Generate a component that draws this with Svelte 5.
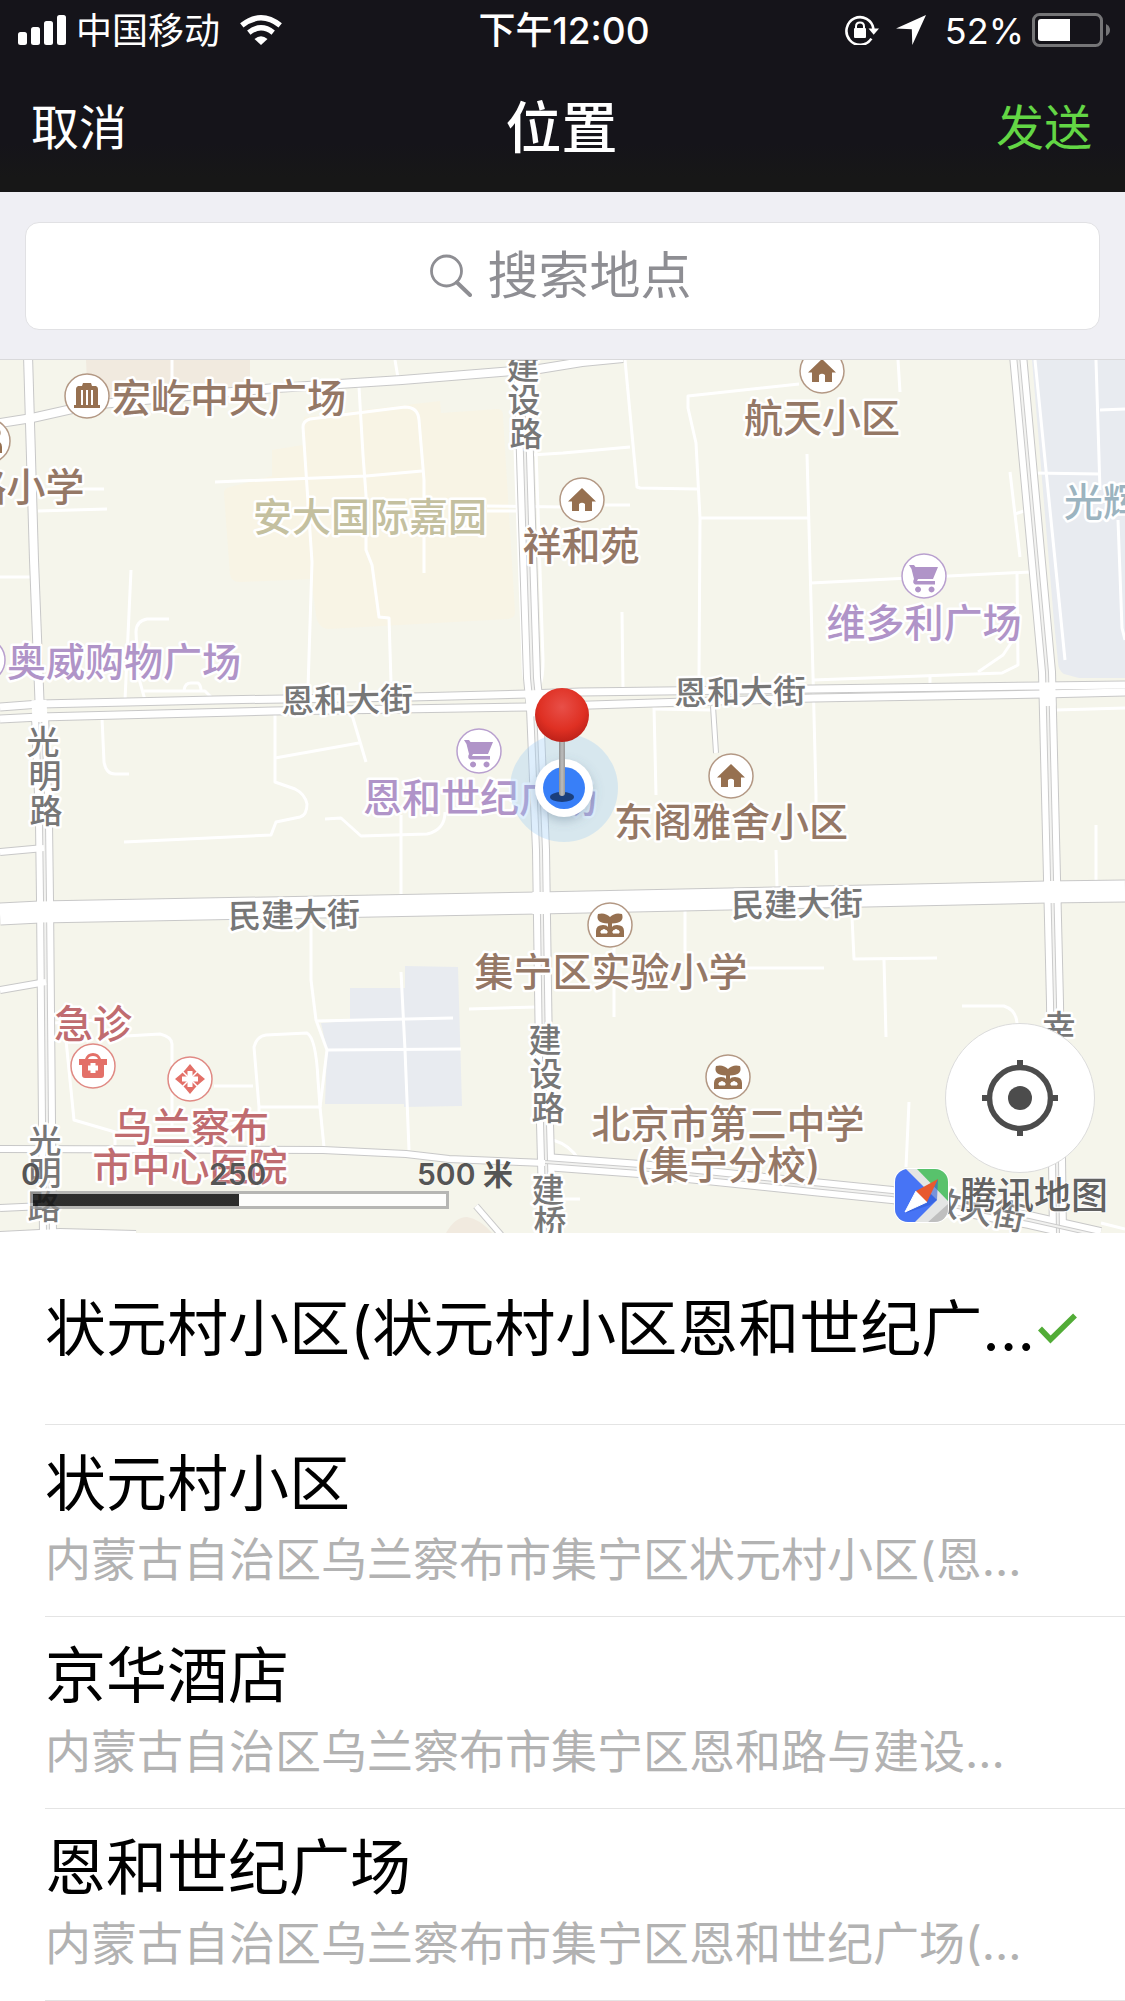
<script lang="ts">
  type Place = { name: string; address?: string };

  const places: Place[] = [
    { name: '状元村小区(状元村小区恩和世纪广…' },
    { name: '状元村小区', address: '内蒙古自治区乌兰察布市集宁区状元村小区(恩…' },
    { name: '京华酒店', address: '内蒙古自治区乌兰察布市集宁区恩和路与建设…' },
    { name: '恩和世纪广场', address: '内蒙古自治区乌兰察布市集宁区恩和世纪广场(…' },
  ];
  let selected = $state(0);

  const areas = [
    { kind: 'plaza', d: 'M86 360H250V390L88 405Z' },
    { kind: 'plaza', d: 'M446 1233Q455 1217 467 1217Q480 1219 492 1233Z' },
    { kind: 'estate', d: 'M304 417L440 401L441 413L498 409Q503 409 503 416L515 612Q515 618 508 619L328 629Q318 628 316 615L311 579L240 582Q231 582 230 574L224 493Q224 488 230 487L272 476V450L303 445Z' },
    { kind: 'campus', d: 'M1032 360H1125V678H1079L1064 674Q1058 670 1058 662L1054 622Z' },
    { kind: 'campus', d: 'M405 966L458 967L462 1106L404 1107V1104H325L327 1050L321 1023L350 1021V988H405Z' },
  ];

  const lanes = [
    'M172 360V380', 'M395 360L398 378', 'M215 482L366 476L422 471',
    'M359 387L363 455L366 495V550L372 565L379 617L389 618L391 682',
    'M308 688L312 562L303 427Q303 421 310 419L405 407Q418 407 419 420L424 480V573',
    'M83 489H104', 'M38 511L107 509', 'M0 577H34', 'M131 570L125 700',
    'M169 619H147Q136 621 136 632L138 675L145 700',
    'M144 691H205L212 698', 'M184 690Q185 683 191 683H198Q201 685 201 691',
    'M487 506L563 507L588 504', 'M487 511H535', 'M531 455L563 453L630 447',
    'M102 718L104 762Q106 774 115 774H129',
    'M275 713V782L295 789Q305 794 307 804Q307 815 300 817L276 822L271 835L124 842',
    'M275 758L359 743', 'M352 715L366 762',
    'M325 819L341 818L361 836L427 834Q445 830 445 812', 'M401 815V897',
    'M311 923V980L316 1020L327 1050L320 1107L324 1147', 'M316 1021L453 1018',
    'M327 1050L461 1049', 'M401 972L405 1050L409 1150', 'M469 1009L537 1007',
    'M54 1023L97 1020', 'M126 1036L160 1034Q172 1037 172 1044V1130',
    'M66 1040L74 1120L115 1132V1147', 'M214 1086H253',
    'M259 1147V1107L254 1047Q257 1036 266 1035L307 1033Q316 1038 318 1080L320 1107',
    'M258 1107H320', 'M200 1130L259 1118',
    'M625 360L637 487L640 488L697 489', 'M799 384L688 396V408L696 443L700 518L699 677',
    'M700 518H808', 'M807 454L813 675L816 795V806', 'M898 360L900 392', 'M605 505H630',
    'M622 612L623 688', 'M811 583L1030 572', 'M1010 472L1020 557', 'M1015 514L1024 511',
    'M1017 573L1018 665L1002 673L813 680', 'M978 672L1003 655L1013 640', 'M930 677V685',
    'M1035 360L1065 660', 'M1096 360L1100 490', 'M1118 520L1122 628L1125 640',
    'M1100 410L1125 409', 'M1032 473L1100 474', 'M1056 710L1125 708',
    'M654 707L656 795', 'M654 709L711 710', 'M776 850L777 887', 'M685 910V953',
    'M747 968H824', 'M614 947V1017', 'M852 917L854 959L937 958', 'M884 960L886 1037',
    'M962 1006H1004Q1016 1010 1017 1023', 'M1096 825V882', 'M909 1102L906 1167',
    'M553 1140Q570 1145 579 1160', 'M562 1199H580', 'M1101 1223L1125 1229',
    'M515 450L523 660Q523 683 528 687', 'M536 450L543 660Q543 683 538 688',
  ];

  const streets = [
    { w: 10, d: 'M0 423L32 418L90 405L276 388L402 380L539 369L582 362L623 358' },
    { w: 10, d: 'M28 355L34 560L40 714' },
    { w: 8, d: 'M0 852L44 848' },
    { w: 8, d: 'M0 990L46 982' },
    { w: 8, d: 'M0 1208L44 1206' },
    { w: 6, d: 'M713 706L716 753' },
    { w: 7, d: 'M476 1206L502 1236' },
    { w: 8, d: 'M0 1235L60 1232L136 1234' },
    { w: 8, d: 'M0 1149L323 1150L406 1154L449 1159L545 1163' },
    { w: 9, d: 'M0 707L40 704L215 700L411 697L528 694L580 692L813 689L1043 686L1125 685' },
    { w: 9, d: 'M0 719L40 717L273 711L528 707L591 705L813 698L1043 694L1125 692' },
    { w: 23, d: 'M0 914L40 912L539 903L1047 892L1125 891' },
  ];
  const avenues = [
    'M40 714L44 823L45 900L48 1236',
    'M522 355L527 522L532 678L535 708L541 850L545 1123L548 1236',
    'M1018 355L1047 672L1050 795L1055 1003L1058 1236',
    'M545 1162L640 1169L813 1187L892 1195L1029 1220L1100 1236',
  ];

  const labels = [
    { t: '宏屹中央广场', x: 229, y: 397, c: 'brown' },
    { t: '路小学', x: 26, y: 486, c: 'brown' },
    { t: '安大国际嘉园', x: 370, y: 516, c: 'olive' },
    { t: '奥威购物广场', x: 124, y: 661, c: 'purple' },
    { t: '祥和苑', x: 581, y: 545, c: 'brown' },
    { t: '航天小区', x: 822, y: 417, c: 'brown' },
    { t: '光辉', x: 1103, y: 501, c: 'steel' },
    { t: '维多利广场', x: 924, y: 622, c: 'purple' },
    { t: '恩和世纪广场', x: 480, y: 797, c: 'purple' },
    { t: '东阁雅舍小区', x: 731, y: 821, c: 'brown' },
    { t: '集宁区实验小学', x: 611, y: 971, c: 'brown' },
    { t: '北京市第二中学', x: 728, y: 1123, c: 'brown' },
    { t: '(集宁分校)', x: 728, y: 1164, c: 'brown' },
    { t: '急诊', x: 93, y: 1023, c: 'red' },
    { t: '乌兰察布', x: 191, y: 1126, c: 'red' },
    { t: '市中心医院', x: 190, y: 1166, c: 'red' },
  ];

  const streetNames = [
    { t: '恩和大街', x: 347, y: 700, r: -1 },
    { t: '恩和大街', x: 740, y: 692, r: -1 },
    { t: '民建大街', x: 294, y: 915, r: -1 },
    { t: '民建大街', x: 797, y: 904, r: -1 },
    { t: '建', x: 523, y: 367, r: 0 }, { t: '设', x: 524, y: 400, r: 0 }, { t: '路', x: 526, y: 434, r: 0 },
    { t: '光', x: 43, y: 742, r: 0 }, { t: '明', x: 45, y: 776, r: 0 }, { t: '路', x: 46, y: 811, r: 0 },
    { t: '光', x: 45, y: 1141, r: 0 }, { t: '明', x: 45, y: 1173, r: 0 }, { t: '路', x: 44, y: 1207, r: 0 },
    { t: '建', x: 545, y: 1040, r: 0 }, { t: '设', x: 546, y: 1074, r: 0 }, { t: '路', x: 548, y: 1108, r: 0 },
    { t: '建', x: 548, y: 1190, r: 0 }, { t: '桥', x: 550, y: 1222, r: 0 },
    { t: '幸', x: 1059, y: 1027, r: 0 },
    { t: '教', x: 944, y: 1203, r: 12 }, { t: '大', x: 977, y: 1210, r: 12 }, { t: '街', x: 1009, y: 1216, r: 12 },
  ];

  const markers = [
    { k: 'hall', x: 87, y: 396 },
    { k: 'school', x: -12, y: 441 },
    { k: 'home', x: 822, y: 371 },
    { k: 'home', x: 582, y: 500 },
    { k: 'home', x: 731, y: 776 },
    { k: 'shop', x: 924, y: 576 },
    { k: 'shop', x: 479, y: 751 },
    { k: 'shop', x: -17, y: 660 },
    { k: 'school', x: 610, y: 925 },
    { k: 'school', x: 728, y: 1077 },
    { k: 'aid', x: 93, y: 1066 },
    { k: 'clinic', x: 190, y: 1079 },
  ];
</script>

<div class="screen">
  <header>
    <div class="status">
      <div class="side">
        <svg class="signal" width="48" height="30" viewBox="0 0 48 30" fill="#fff" aria-hidden="true">
          <rect y="17" width="9" height="13" rx="2.5" /><rect x="13" y="12" width="9" height="18" rx="2.5" />
          <rect x="26" y="6" width="9" height="24" rx="2.5" /><rect x="39" width="9" height="30" rx="2.5" />
        </svg>
        <span class="carrier">中国移动</span>
        <svg class="wifi" width="42" height="30" viewBox="0 0 42 30" aria-hidden="true">
          <g fill="none" stroke="#fff" stroke-width="5.4">
            <path d="M1.8 10.4Q21 -4.8 40.2 10.4" /><path d="M8.8 17.6Q21 8 33.2 17.6" />
          </g>
          <path d="M14.5 24Q21 18.500 27.500 24L21 30Z" fill="#fff" />
        </svg>
      </div>
      <time>下午12:00</time>
      <div class="side right">
        <svg class="lock" width="34" height="30" viewBox="0 0 34 30" aria-hidden="true">
          <path d="M28.500 14A13.600 13.800 0 1 0 26.400 23.600" fill="none" stroke="#fff" stroke-width="2.6" />
          <path d="M23.500 13.500H34L28.700 19.800Z" fill="#fff" />
          <rect x="9" y="13" width="12" height="10" rx="1" fill="#fff" />
          <path d="M11 14V11.500Q11 7.500 15 7.500Q19 7.500 19 11.500V14" fill="none" stroke="#fff" stroke-width="2" />
        </svg>
        <svg class="arrow" width="30" height="30" viewBox="0 0 30 30" aria-hidden="true">
          <path d="M30 0L16.300 30L15.800 14.300L0 13.500Z" fill="#fff" />
        </svg>
        <span class="percent">52%</span>
        <svg width="78" height="34" viewBox="0 0 78 34" aria-hidden="true">
          <rect x="1.5" y="1.5" width="68" height="31" rx="6" fill="none" stroke="#757577" stroke-width="3" />
          <path d="M9 6H38V28H9Q6 28 6 25V9Q6 6 9 6Z" fill="#fff" />
          <path d="M74 11Q78 13 78 17T74 23Z" fill="#757577" />
        </svg>
      </div>
    </div>
    <nav>
      <button class="nav-btn">取消</button>
      <h1>位置</h1>
      <button class="nav-btn send">发送</button>
    </nav>
  </header>

  <div class="search-bar">
    <label class="search">
      <svg width="42" height="43" viewBox="0 0 42 43" fill="none" stroke="#8e8e93" aria-hidden="true">
        <circle cx="16.500" cy="17" r="15" stroke-width="2.8" />
        <path d="M27 28.500L40 41" stroke-width="4" stroke-linecap="round" />
      </svg>
      <input type="text" placeholder="搜索地点" aria-label="搜索地点" />
    </label>
  </div>

  <section class="map" aria-label="地图">
    <svg class="canvas" viewBox="0 360 1125 873">
      <defs>
        <radialGradient id="pinHead" cx="0.5" cy="0.35" r="0.65">
          <stop offset="0" stop-color="#e84f48" /><stop offset="0.65" stop-color="#df3023" /><stop offset="1" stop-color="#bd2119" />
        </radialGradient>
        <linearGradient id="pinStick"><stop offset="0" stop-color="#8f8f8f" /><stop offset="0.5" stop-color="#bdbdbd" /><stop offset="1" stop-color="#999" /></linearGradient>
        <filter id="dotShadow" x="-50%" y="-50%" width="200%" height="200%"><feGaussianBlur stdDeviation="6" /></filter>
      </defs>
      {#each areas as a}<path class={a.kind} d={a.d} />{/each}
      <g class="lanes">{#each lanes as d}<path {d} />{/each}</g>
      <g class="casing">
        {#each streets as s}<path d={s.d} stroke-width={s.w} />{/each}
        {#each avenues as d}<path {d} stroke-width="18" />{/each}
      </g>
      <g class="fill">
        {#each avenues as d}<path {d} stroke-width="16" />{/each}
      </g>
      <g class="median">{#each avenues as d}<path {d} /><path class="gap" {d} />{/each}</g>
      <g class="fill">
        {#each streets as s}<path d={s.d} stroke-width={s.w - 2} />{/each}
        <path d="M532 692L536 716M1047 684L1048 706M39 700L40 722M540 892V914M1052 881L1053 903" stroke-width="15" />
      </g>

      {#each streetNames as s}
        <text class="street" x={s.x} y={s.y + 12} transform="rotate({s.r} {s.x} {s.y})">{s.t}</text>
      {/each}
      {#each labels as l}
        <text class="label {l.c}" x={l.x} y={l.y + 15}>{l.t}</text>
      {/each}

      {#each markers as m}
        <g class="marker {m.k}" transform="translate({m.x} {m.y})">
          <circle r="22" />
          {#if m.k === 'home'}
            <path d="M0 -12L14 1.500H10V11H3V4Q0 1.500 -3 4V11H-10V1.500H-14Z" />
          {:else if m.k === 'shop'}
            <path d="M-15 -11H-10L-8.500 -9H14L9 3H-6L-7 5H11V8.500H-9Q-12 7 -10 3L-12.500 -7Z" />
            <path d="M-6 10.500a3 3 0 1 0 .1 0ZM7.500 10.500a3 3 0 1 0 .1 0Z" />
          {:else if m.k === 'hall'}
            <path d="M-4 -13H4L5 -10H9Q11 -9 11 -7V9H13V12H-13V9H-11V-7Q-11 -9 -9 -10H-5Z" />
            <path class="cut" d="M-5 -6V9M0 -6V9M5 -6V9" />
          {:else if m.k === 'school'}
            <path d="M-12 -11Q-5 -13 0 -8Q5 -13 12 -11Q15 -2 2 -1.500V2Q3 0 7 0Q14 0 14 6V12H-14V6Q-14 0 -7 0Q-3 0 -2 2V-1.500Q-15 -2 -12 -11Z" />
            <path class="cut" d="M-9 8V6Q-6 3 -3 6V8ZM3 8V6Q6 3 9 6V8Z" />
          {:else if m.k === 'aid'}
            <path d="M-14 -7H-8Q-6 -13 0 -13Q6 -13 8 -7H14V-1H11V9Q11 12 8 12H-8Q-11 12 -11 9V-1H-14ZM-5 -7H5Q4 -10 0 -10T-5 -7Z" fill-rule="evenodd" />
            <path class="cut cross" d="M0 -3V7M-5 2H5" />
          {:else}
            <path d="M0 -15L5 -9L9 -5L15 0L9 5L5 9L0 15L-5 9L-9 5L-15 0L-9 -5L-5 -9Z" />
            <path class="cut cross" d="M0 -8V8M-8 0H8" />
            <path class="cut thin" d="M-9 -9L9 9M9 -9L-9 9" />
          {/if}
        </g>
      {/each}

      <circle cx="564" cy="788" r="54" fill="#9ccbf7" fill-opacity="0.33" />
      <circle cx="564" cy="792" r="28" fill="#4f6a80" fill-opacity="0.4" filter="url(#dotShadow)" />
      <circle cx="564" cy="788" r="29" fill="#fff" />
      <circle cx="564" cy="788" r="21" fill="#387ff8" />
      <ellipse cx="562" cy="797" rx="12" ry="5" fill="#1b3f7c" />
      <path d="M559 740H565V793Q565 796 562 796T559 793Z" fill="url(#pinStick)" />
      <circle cx="562" cy="715" r="27" fill="url(#pinHead)" />
    </svg>

    <div class="scale">
      <div class="marks"><span>0</span><span>250</span><span>500 米</span></div>
      <div class="bar"></div>
    </div>

    <button class="locate" aria-label="定位">
      <svg width="76" height="76" viewBox="-38 -38 76 76" aria-hidden="true">
        <circle r="30.500" fill="none" stroke="#4c4c4c" stroke-width="5.500" />
        <circle r="12" fill="#4c4c4c" />
        <path d="M0 -38V-30M0 30V38M-38 0H-30M30 0H38" stroke="#4c4c4c" stroke-width="6" />
      </svg>
    </button>

    <div class="brand">
      <svg width="55" height="55" viewBox="0 0 55 55" aria-hidden="true">
        <defs><clipPath id="tile"><rect x="1" y="1" width="53" height="53" rx="13" /></clipPath></defs>
        <rect width="55" height="55" rx="14" fill="#fff" />
        <g clip-path="url(#tile)">
          <rect width="55" height="55" fill="#e4e5e4" />
          <path d="M0 0H11L43 32L20 55H0Z" fill="#4774f5" />
          <path d="M22 0H55V34Z" fill="#58c26c" />
          <path d="M55 35V55H33Z" fill="#bfbfbf" />
          <path d="M12 45L44 11L43 32L36 37Z" fill="#2f5bd6" opacity="0.6" />
        </g>
        <path d="M11 44L22 23L33 34Z" fill="#fff" stroke="#fff" stroke-linejoin="round" />
        <path d="M44 11L22 23L33 34Z" fill="#e8592f" />
      </svg>
      <span>腾讯地图</span>
    </div>
  </section>

  <ul class="places">
    {#each places as p, i}
      <li>
        <button class="place" aria-pressed={selected === i} onclick={() => (selected = i)}>
          <span class="texts">
            <span class="name">{p.name}</span>
            {#if p.address}<span class="address">{p.address}</span>{/if}
          </span>
          {#if selected === i}
            <svg class="check" width="39" height="31" viewBox="0 0 39 31" aria-hidden="true">
              <path d="M2 15.500L12.500 26.500L37 2.500" fill="none" stroke="#52ac37" stroke-width="5.500" />
            </svg>
          {/if}
        </button>
      </li>
    {/each}
  </ul>
</div>

<style>
  :global(body) {
    margin: 0;
    background: #fff;
  }
  .screen {
    font-family: Inter, 'Noto Sans CJK SC', sans-serif;
    overflow: hidden;
  }
  button {
    font: inherit;
    border: 0;
    padding: 0;
    background: none;
    cursor: pointer;
  }
  svg {
    display: block;
    flex: none;
  }

  header {
    color: #fff;
    background: linear-gradient(#15141a 75%, #171717 92%);
  }
  .status {
    display: grid;
    grid-template-columns: 1fr auto 1fr;
    align-items: center;
    padding: 0 15px 0 18px;
    font-size: 36px;
    line-height: 60px;
  }
  .status span,
  .status time {
    padding-top: 2px;
    line-height: 58px;
  }
  .side {
    display: flex;
    align-items: center;
  }
  .right {
    justify-content: flex-end;
  }
  .carrier {
    margin: 0 20px 0 10px;
  }
  .status time {
    font-size: 37px;
    font-weight: 500;
  }
  .arrow {
    margin: 0 19px 0 17px;
  }
  .percent {
    margin-right: 8px;
  }
  nav {
    display: grid;
    grid-template-columns: 1fr auto 1fr;
    align-items: center;
    padding: 4px 33px 0 31px;
    line-height: 128px;
  }
  .nav-btn {
    justify-self: start;
    font-size: 48px;
    color: #fff;
  }
  .nav-btn.send {
    justify-self: end;
    color: #63d645;
  }
  h1 {
    margin: 0;
    font-size: 56px;
    font-weight: 500;
  }

  .search-bar {
    padding: 30px 25px 29px;
    background: #efeff4;
    border-bottom: 1px solid #d9d9db;
  }
  .search {
    display: flex;
    align-items: center;
    justify-content: center;
    gap: 16px;
    height: 104px;
    padding-bottom: 2px;
    border: 1px solid #e1e1e4;
    border-radius: 14px;
    background: #fff;
  }
  .search input {
    width: 208px;
    height: 80px;
    padding: 0;
    border: 0;
    outline: 0;
    background: none;
    font: inherit;
    font-size: 51px;
    color: #222;
  }
  .search input::placeholder {
    color: #8e8e93;
    opacity: 1;
  }

  .map {
    position: relative;
    background: #f5f5eb;
    overflow: hidden;
  }
  .canvas {
    width: 100%;
    height: auto;
  }
  .plaza { fill: #f1eadf; }
  .estate { fill: #f8f4e5; }
  .campus { fill: #e8ebf0; }
  .lanes path, .casing path, .fill path, .median path {
    fill: none;
    stroke-linejoin: round;
  }
  .lanes path { stroke: #fff; stroke-width: 3; }
  .casing path { stroke: #c8c8c8; }
  .fill path { stroke: #fff; }
  .median path { stroke: #cbcbcb; stroke-width: 4; }
  .median .gap { stroke: #f2f2f0; stroke-width: 2; }
  text {
    text-anchor: middle;
    font-weight: 500;
    paint-order: stroke;
    stroke: #fff;
    stroke-width: 5px;
    stroke-linejoin: round;
  }
  .label { font-size: 39px; }
  .street { font-size: 33px; fill: #777; }
  .brown { fill: #957866; }
  .olive { fill: #c4c09f; }
  .purple { fill: #b094c8; }
  .steel { fill: #9cb4c0; }
  .red { fill: #c06c70; }
  .marker { fill: #967050; }
  .marker circle { fill: #fff; stroke: #b39884; stroke-width: 1.5; }
  .marker.shop { fill: #b094c8; }
  .marker.shop circle { stroke: #b9a0cf; }
  .marker.aid, .marker.clinic { fill: #e37068; }
  .marker.aid circle, .marker.clinic circle { stroke: #e08a84; }
  .cut { stroke: #fff; stroke-width: 2; fill: none; }
  .marker.school .cut { fill: #fff; stroke-width: 1; }
  .cut.cross { stroke-width: 5; }
  .cut.thin { stroke-width: 1.5; }

  .scale {
    position: absolute;
    left: 21px;
    bottom: 24px;
    color: #555;
  }
  .marks {
    display: grid;
    grid-template-columns: 188px 208px auto;
    font-size: 30px;
    font-weight: 600;
    line-height: 34px;
    text-shadow: 0 0 2px #fff;
  }
  .bar {
    box-sizing: border-box;
    width: 419px;
    height: 18px;
    margin-left: 9px;
    border: 3px solid rgb(155 155 155 / 70%);
    background: linear-gradient(90deg, rgb(18 18 18 / 88%) 50%, #fdfdfb 50%) padding-box;
  }
  .locate {
    position: absolute;
    right: 30px;
    bottom: 60px;
    display: grid;
    place-items: center;
    width: 150px;
    height: 150px;
    border: 1px solid #dcdcdc;
    border-radius: 50%;
    background: #fff;
  }
  .brand {
    position: absolute;
    right: 17px;
    bottom: 10px;
    display: flex;
    align-items: center;
    gap: 11px;
    font-size: 37px;
    font-weight: 500;
    line-height: 55px;
    color: #626262;
    text-shadow: 0 0 2px #fff, 0 0 2px #fff, 0 0 2px #fff, 0 0 3px #fff;
  }

  .places {
    margin: 0;
    padding: 0 0 0 45px;
    list-style: none;
    background: #fff;
  }
  li {
    border-bottom: 1px solid #e4e4e4;
  }
  .place {
    display: flex;
    align-items: center;
    width: 100%;
    height: 191px;
    text-align: left;
  }
  .texts {
    display: flex;
    flex-direction: column;
    min-width: 0;
    white-space: nowrap;
  }
  .name {
    font-size: 61px;
    line-height: 76px;
    color: #000;
  }
  .address {
    font-size: 46px;
    line-height: 74px;
    color: #b2b2b2;
  }
  .check {
    margin: 0 48px 0 auto;
  }
</style>
